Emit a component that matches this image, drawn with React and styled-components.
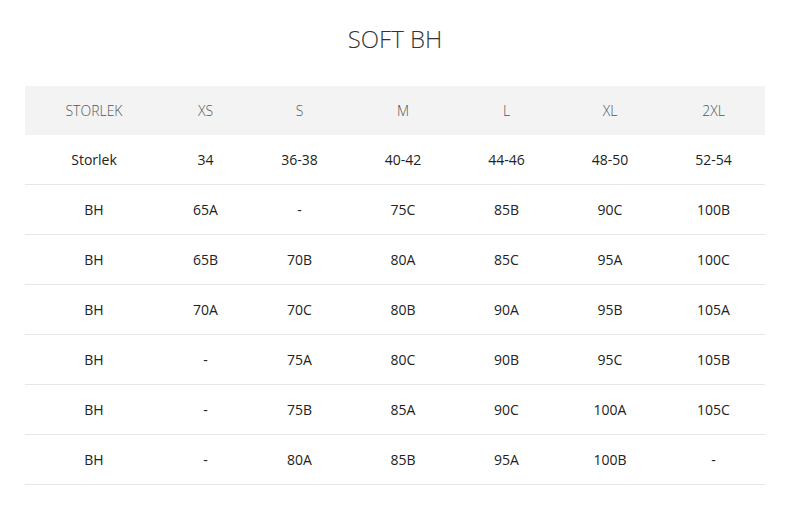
import React from "react";
import styled, { createGlobalStyle } from "styled-components";

const GlobalStyle = createGlobalStyle`
  body {
    margin: 0;
    background: #ffffff;
    font-family: "Open Sans", "Liberation Sans", sans-serif;
  }
`;

const Root = styled.div`
  width: 787px;
  padding: 22px 22px 0 25px;
  box-sizing: border-box;
`;

const Title = styled.h1`
  margin: 0 0 30px 0;
  text-align: center;
  font-size: 24px;
  font-weight: 300;
  line-height: 34px;
  color: #333333;
`;

const Table = styled.table`
  width: 740px;
  border-collapse: collapse;
  table-layout: fixed;
`;

const HeadCell = styled.th`
  height: 49px;
  padding: 0;
  background: #f3f3f3;
  font-size: 14px;
  font-weight: 300;
  color: #555555;
  text-align: center;
  text-transform: uppercase;
`;

const Row = styled.tr`
  border-bottom: 1px solid #e6e6e6;
`;

const Cell = styled.td`
  height: 49px;
  padding: 0;
  font-size: 14px;
  font-weight: 400;
  color: #222222;
  text-align: center;
`;

const columns = [
  { label: "Storlek", width: 138 },
  { label: "XS", width: 85 },
  { label: "S", width: 103 },
  { label: "M", width: 104 },
  { label: "L", width: 103 },
  { label: "XL", width: 104 },
  { label: "2XL", width: 103 },
];

const rows = [
  ["Storlek", "34", "36-38", "40-42", "44-46", "48-50", "52-54"],
  ["BH", "65A", "-", "75C", "85B", "90C", "100B"],
  ["BH", "65B", "70B", "80A", "85C", "95A", "100C"],
  ["BH", "70A", "70C", "80B", "90A", "95B", "105A"],
  ["BH", "-", "75A", "80C", "90B", "95C", "105B"],
  ["BH", "-", "75B", "85A", "90C", "100A", "105C"],
  ["BH", "-", "80A", "85B", "95A", "100B", "-"],
];

const App = () => {
  return (
    <Root>
      <GlobalStyle />
      <Title>SOFT BH</Title>
      <Table>
        <colgroup>
          {columns.map((c) => (
            <col key={c.label} style={{ width: c.width }} />
          ))}
        </colgroup>
        <thead>
          <tr>
            {columns.map((c) => (
              <HeadCell key={c.label}>{c.label}</HeadCell>
            ))}
          </tr>
        </thead>
        <tbody>
          {rows.map((r, i) => (
            <Row key={i}>
              {r.map((v, j) => (
                <Cell key={j}>{v}</Cell>
              ))}
            </Row>
          ))}
        </tbody>
      </Table>
    </Root>
  );
};

export default App;
